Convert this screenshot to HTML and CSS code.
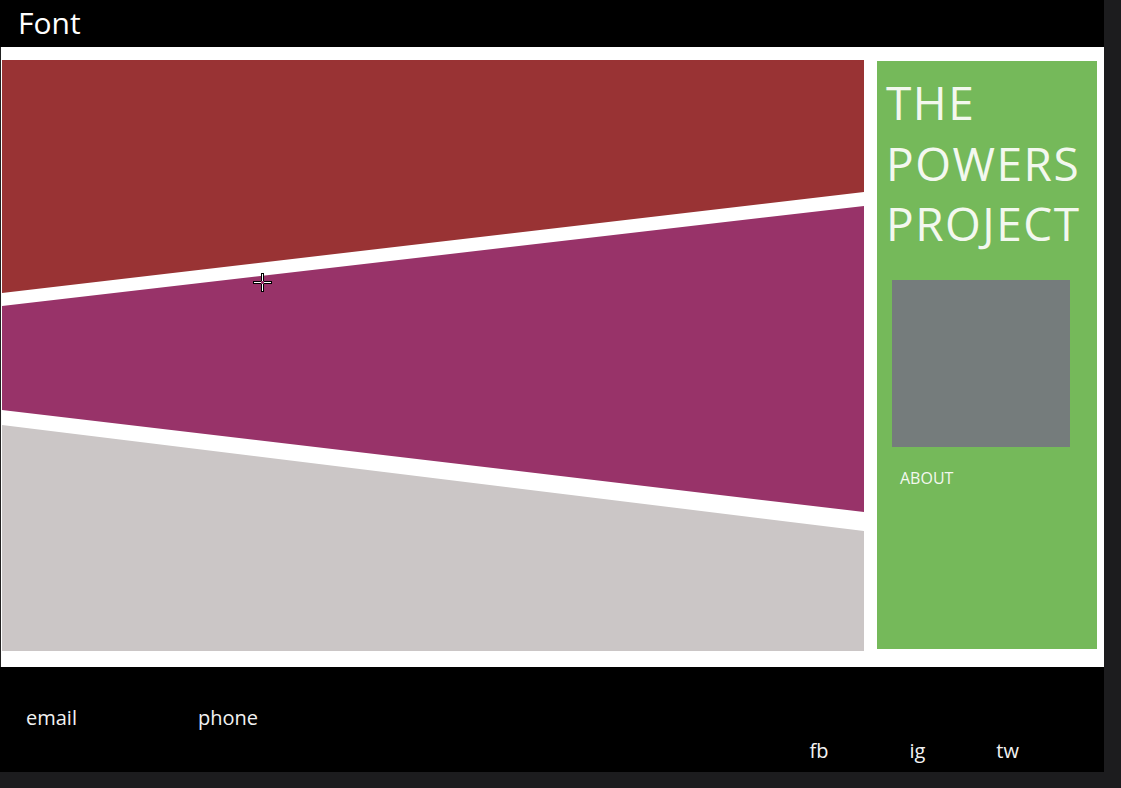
FILE: index.html
```html
<!DOCTYPE html>
<html>
<head>
<meta charset="utf-8">
<link rel="stylesheet" href="styles.css">
</head>
<body>
<div class="frame">
  <header class="topbar"><span class="brand">Font</span></header>
  <main class="stage">
    <div class="canvas">
      <svg class="bands" width="862" height="591" viewBox="0 0 862 591">
        <rect width="862" height="591" fill="#ffffff"/>
        <polygon points="0,0 862,0 862,132 0,233" fill="#993334"/>
        <polygon points="0,246 862,146 862,452 0,350" fill="#983369"/>
        <polygon points="0,365 862,471 862,591 0,591" fill="#cbc6c6"/>
      </svg>
      <svg class="cursor" width="19" height="19" viewBox="0 0 19 19">
        <path d="M9.5 0v8M9.5 11v8M0 9.5h8M11 9.5h8" stroke="#000" stroke-width="3"/>
        <path d="M9.5 1v7M9.5 11v7M1 9.5h7M11 9.5h7" stroke="#fff" stroke-width="1"/>
      </svg>
    </div>
    <aside class="sidebar">
      <h1 class="title">THE<br>POWERS<br>PROJECT</h1>
      <div class="photo"></div>
      <a class="about">ABOUT</a>
    </aside>
  </main>
  <footer class="footer">
    <div class="contact">
      <span class="email">email</span>
      <span class="phone">phone</span>
    </div>
    <div class="social">
      <span class="fb">fb</span>
      <span class="ig">ig</span>
      <span class="tw">tw</span>
    </div>
  </footer>
</div>
</body>
</html>
```
FILE: styles.css
```css
html, body {
  margin: 0;
  padding: 0;
  background: #1c1c1e;
}
body {
  font-family: "Open Sans", "Noto Sans", sans-serif;
  width: 1121px;
  height: 788px;
  overflow: hidden;
}
.frame {
  width: 1104px;
  height: 772px;
  display: flex;
  flex-direction: column;
  background: #000;
}
.topbar {
  height: 47px;
  background: #000;
  display: flex;
  align-items: center;
  padding-left: 18px;
  box-sizing: border-box;
}
.brand {
  color: #fff;
  font-size: 30px;
  font-weight: 400;
  line-height: 1;
  margin-top: -2px;
}
.stage {
  height: 620px;
  background: #fff;
  display: flex;
  padding: 13px 7px 0 1px;
  box-sizing: border-box;
  gap: 14px;
  border-left: 1px solid #222;
}
.canvas {
  position: relative;
  width: 862px;
  height: 591px;
  flex: none;
}
.bands {
  display: block;
}
.cursor {
  position: absolute;
  left: 251px;
  top: 213px;
}
.sidebar {
  width: 220px;
  height: 588px;
  margin-top: 1px;
  margin-left: -1px;
  background: #75b95a;
  box-sizing: border-box;
  padding: 11px 0 0 9px;
  display: flex;
  flex-direction: column;
}
.title {
  margin: 0;
  color: #f3f8ef;
  font-weight: 400;
  font-size: 46px;
  line-height: 60.5px;
  letter-spacing: 1.5px;
}
.photo {
  width: 178px;
  height: 167px;
  background: #757c7c;
  margin: 26px 0 0 6px;
}
.about {
  color: #f3f8ef;
  font-size: 16px;
  margin: 20px 0 0 14px;
}
.footer {
  flex: 1;
  background: #000;
  display: flex;
  justify-content: space-between;
  color: #f2f2f2;
  font-size: 20px;
  position: relative;
}
.contact {
  display: flex;
  padding: 37px 0 0 26px;
  align-items: flex-start;
}
.phone {
  margin-left: 121px;
}
.social {
  display: flex;
  align-self: flex-end;
  padding: 0 85px 8px 0;
}
.ig {
  margin-left: 81px;
}
.tw {
  margin-left: 71px;
}
```
